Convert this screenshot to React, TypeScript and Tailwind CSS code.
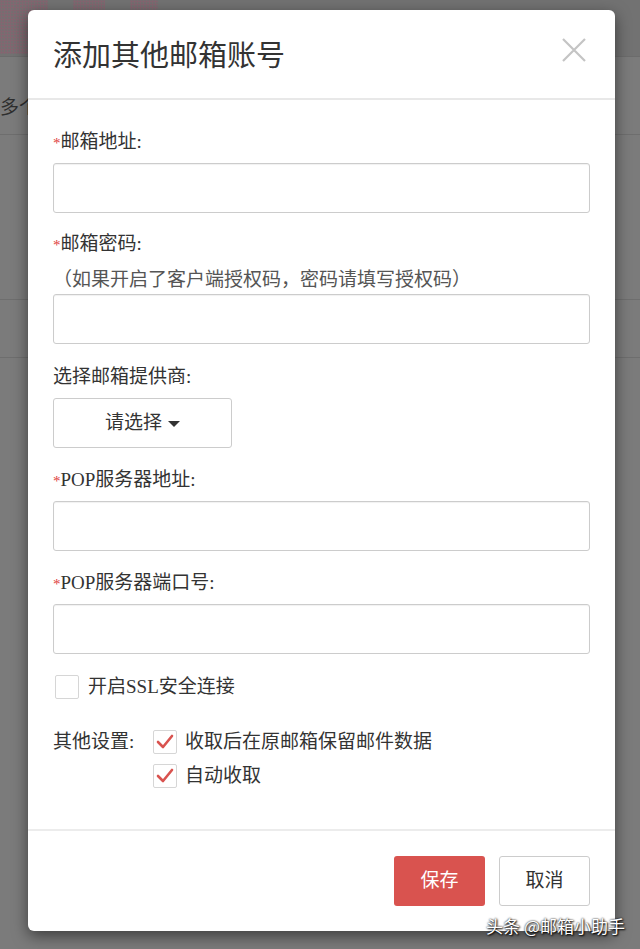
import React from "react";

const font = { fontFamily: '"Liberation Serif", "Noto Sans CJK SC", serif' };

const Label = ({ text, required }: { text: string; required?: boolean }) => (
  <div className="h-[28px] text-[19px] leading-[28px] text-[#333]">
    {required && <span className="text-[15px] text-[#e0413d]">*</span>}
    {text}
  </div>
);

const Input = () => (
  <div className="h-[50px] w-full rounded-[3px] border border-[#cccccc] bg-white shadow-[inset_0_1px_1px_rgba(0,0,0,0.06)]" />
);

const Check = ({ checked }: { checked?: boolean }) => (
  <div className="flex h-[24px] w-[24px] shrink-0 items-center justify-center rounded-[2px] border border-[#d6d6d6] bg-white">
    {checked && (
      <svg width="20" height="20" viewBox="0 0 20 20" fill="none">
        <polyline
          points="3,10 8,15 17,4"
          stroke="#d9534f"
          strokeWidth="2.6"
          strokeLinecap="round"
          strokeLinejoin="round"
        />
      </svg>
    )}
  </div>
);

const Dots = ({ w }: { w: string }) => (
  <div
    className={`h-[54px] ${w} bg-[image:radial-gradient(circle,#836670_1.1px,transparent_1.5px)] bg-[length:3px_3px]`}
  />
);

const Background = () => (
  <div className="flex h-full w-full flex-col bg-[#7b7b7b]" style={font}>
    <div className="flex h-[57px] gap-[25px] border-b border-[#6c6c6c] bg-[#727272]">
      <Dots w="w-[48px]" />
      <Dots w="w-[32px]" />
      <Dots w="w-[28px]" />
    </div>
    <div className="flex h-[78px] items-end border-b border-[#6e6e6e] pb-[12px]">
      <span className="text-[19px] leading-[28px] text-[#2e2e2e]">多个</span>
    </div>
    <div className="h-[165px] border-b border-[#6e6e6e]" />
    <div className="h-[58px] border-b border-[#6e6e6e]" />
    <div className="grow" />
  </div>
);

const Modal = () => (
  <div
    className="ml-[28px] mt-[10px] flex h-[921px] w-[587px] flex-col rounded-[6px] bg-white shadow-[0_5px_15px_rgba(0,0,0,0.5)]"
    style={font}
  >
    <div className="flex h-[90px] shrink-0 items-start justify-between border-b-2 border-[#e8e8e8] px-[25px]">
      <h1 className="mt-[27px] text-[29px] leading-[38px] text-[#333]">添加其他邮箱账号</h1>
      <svg className="mr-[4px] mt-[28px]" width="24" height="24" viewBox="0 0 24 24">
        <path d="M1 1 L23 23 M23 1 L1 23" stroke="#c4c4c4" strokeWidth="2.2" />
      </svg>
    </div>

    <div className="flex grow flex-col px-[25px] pt-[28px]">
      <Label text="邮箱地址:" required />
      <div className="mt-[7px]">
        <Input />
      </div>

      <div className="mt-[17px]">
        <Label text="邮箱密码:" required />
      </div>
      <div className="mt-[8px] h-[28px] text-[19px] leading-[28px] text-[#555]">
        （如果开启了客户端授权码，密码请填写授权码）
      </div>
      <Input />

      <div className="mt-[19px]">
        <Label text="选择邮箱提供商:" />
      </div>
      <button className="mt-[7px] flex h-[50px] w-[179px] items-center justify-center gap-[6px] rounded-[3px] border border-[#cccccc] bg-white text-[19px] text-[#333]">
        请选择
        <span className="mt-[2px] h-0 w-0 border-x-[6px] border-t-[6px] border-x-transparent border-t-[#333]" />
      </button>

      <div className="mt-[18px]">
        <Label text="POP服务器地址:" required />
      </div>
      <div className="mt-[7px]">
        <Input />
      </div>

      <div className="mt-[18px]">
        <Label text="POP服务器端口号:" required />
      </div>
      <div className="mt-[7px]">
        <Input />
      </div>

      <div className="mt-[19px] flex items-center gap-[9px] pl-[2px]">
        <Check />
        <span className="text-[19px] leading-[28px] text-[#333]">开启SSL安全连接</span>
      </div>

      <div className="mt-[29px] flex items-start">
        <span className="w-[100px] text-[19px] leading-[24px] text-[#333]">其他设置:</span>
        <div className="flex flex-col gap-[10px]">
          <div className="flex items-center gap-[8px]">
            <Check checked />
            <span className="text-[19px] leading-[24px] text-[#333]">收取后在原邮箱保留邮件数据</span>
          </div>
          <div className="flex items-center gap-[8px]">
            <Check checked />
            <span className="text-[19px] leading-[24px] text-[#333]">自动收取</span>
          </div>
        </div>
      </div>
    </div>

    <div className="flex h-[102px] shrink-0 items-start justify-end gap-[14px] border-t-2 border-[#ececec] px-[25px] pt-[25px]">
      <button className="h-[50px] w-[91px] rounded-[3px] bg-[#d9534f] text-[19px] text-white">保存</button>
      <button className="h-[50px] w-[91px] rounded-[3px] border border-[#cccccc] bg-white text-[19px] text-[#333]">
        取消
      </button>
    </div>
  </div>
);

export default function App() {
  return (
    <div className="relative h-[949px] w-[640px] overflow-hidden">
      <Background />
      <div className="absolute inset-0">
        <Modal />
      </div>
      <div
        className="absolute bottom-[11px] right-[15px] text-[17px] text-white [text-shadow:0_0_2px_#000,1px_1px_2px_#000]"
        style={{ fontFamily: '"Noto Sans CJK SC", sans-serif' }}
      >
        头条 @邮箱小助手
      </div>
    </div>
  );
}
